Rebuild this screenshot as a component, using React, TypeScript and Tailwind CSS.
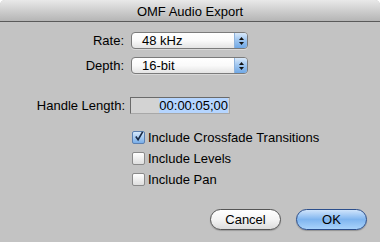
function Popup({ value }: { value: string }) {
  return (
    <div className="flex h-[17px] w-[117px] overflow-hidden rounded-[4px] border border-[#7b7b7b] bg-gradient-to-b from-white via-[#fafafa] to-[#e4e4e4] shadow-[0_1px_0_rgba(255,255,255,0.35)]">
      <span className="flex-1 pl-[10px] leading-[15px]">{value}</span>
      <span className="flex w-[13px] flex-col items-center justify-center gap-[2px] border-l border-[#8fb3dc] bg-gradient-to-b from-[#d9e9fa] via-[#9cc4ef] to-[#6fa8e6]">
        <svg width="5" height="3" viewBox="0 0 5 3">
          <path d="M2.5 0L5 3H0z" fill="#111" />
        </svg>
        <svg width="5" height="3" viewBox="0 0 5 3">
          <path d="M0 0h5L2.5 3z" fill="#111" />
        </svg>
      </span>
    </div>
  );
}

function Check({ label, checked }: { label: string; checked?: boolean }) {
  return (
    <div className="flex h-[21px] items-center pl-[132px]">
      <span
        className={
          checked
            ? "flex h-[13px] w-[13px] items-center justify-center rounded-[2px] border border-[#5b7fb0] bg-gradient-to-b from-[#d6e8fb] to-[#79aee8]"
            : "h-[13px] w-[13px] rounded-[2px] border border-[#8a8a8a] bg-gradient-to-b from-white to-[#dedede]"
        }
      >
        {checked && (
          <svg width="11" height="11" viewBox="0 0 11 11" className="-mt-[2px] ml-[1px]">
            <path d="M2 5.5L4.5 9L9.5 0.5" fill="none" stroke="#1a2a44" strokeWidth="1.8" />
          </svg>
        )}
      </span>
      <span className="ml-[3px]">{label}</span>
    </div>
  );
}

export default function App() {
  return (
    <div className="h-[242px] w-[380px] overflow-hidden bg-white font-['Liberation_Sans',Arial,sans-serif] text-[13px] leading-[17px] text-black">
      <div className="h-full rounded-t-[5px] bg-[#c3c3c3]">
        <div className="flex h-[22px] items-center justify-center rounded-t-[5px] border-b border-[#5a5a5a] bg-gradient-to-b from-[#e9e9e9] to-[#b5b5b5] pt-[1px]">
          OMF Audio Export
        </div>

        <div className="mt-[10px] flex items-center">
          <span className="w-[124px] text-right">Rate:</span>
          <span className="ml-[7px]">
            <Popup value="48 kHz" />
          </span>
        </div>
        <div className="mt-[8px] flex items-center">
          <span className="w-[124px] text-right">Depth:</span>
          <span className="ml-[7px]">
            <Popup value="16-bit" />
          </span>
        </div>

        <div className="mt-[23px] flex items-center">
          <span className="w-[125px] text-right">Handle Length:</span>
          <div className="ml-[5px] flex h-[17px] w-[100px] items-center justify-end border border-[#6a6a6a] border-b-[#a8a8a8] border-r-[#a8a8a8] bg-[#d3d3d3] pr-[1px]">
            <span className="bg-[#b5d5ff] leading-[15px]">00:00:05;00</span>
          </div>
        </div>

        <div className="mt-[13px]">
          <Check label="Include Crossfade Transitions" checked />
          <Check label="Include Levels" />
          <Check label="Include Pan" />
        </div>

        <div className="mt-[19px] flex justify-end gap-[15px] pr-[13px]">
          <button className="h-[21px] w-[71px] rounded-full border border-[#555] bg-gradient-to-b from-white via-[#f4f4f4] to-[#dcdcdc] shadow-[0_1px_1px_rgba(0,0,0,0.2)]">
            Cancel
          </button>
          <button className="h-[21px] w-[71px] rounded-full border border-[#2c4f8c] bg-gradient-to-b from-[#cfe4fb] via-[#7fb5ef] to-[#a9d3fb] shadow-[0_1px_1px_rgba(0,0,0,0.25)]">
            OK
          </button>
        </div>
      </div>
    </div>
  );
}
